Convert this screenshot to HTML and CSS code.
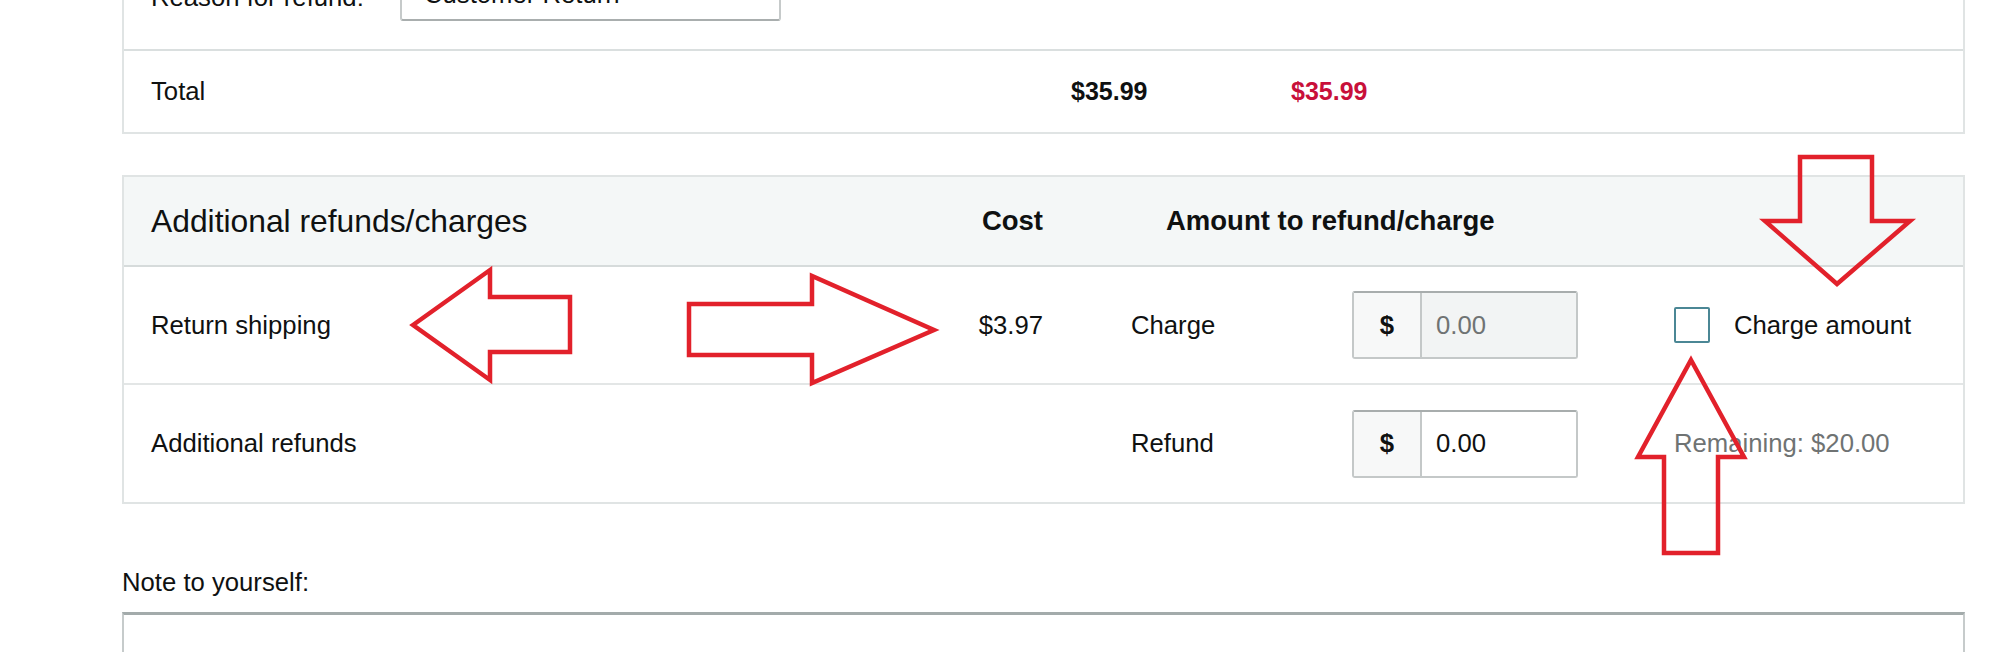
FILE: index.html
```html
<!DOCTYPE html>
<html lang="en">
<head>
<meta charset="utf-8">
<title>Additional refunds/charges</title>
<link rel="stylesheet" href="styles.css">
</head>
<body>
<div class="page">
  <div class="card card-top">
    <div class="reason-row">
      <span class="reason-label">Reason for refund:</span>
      <div class="select"><span>Customer Return</span></div>
    </div>
    <div class="total-row">
      <span>Total</span>
      <span class="amt">$35.99</span>
      <span class="amt red">$35.99</span>
    </div>
  </div>

  <div class="card card-extra">
    <div class="grid-row head">
      <div class="c-label heading">Additional refunds/charges</div>
      <div class="c-cost th">Cost</div>
      <div class="c-amount th">Amount to refund/charge</div>
    </div>
    <div class="grid-row">
      <div class="c-label">Return shipping</div>
      <div class="c-cost">$3.97</div>
      <div class="c-type">Charge</div>
      <div class="c-input">
        <div class="input-group">
          <span class="prefix">$</span>
          <span class="field disabled">0.00</span>
        </div>
      </div>
      <div class="c-extra">
        <span class="checkbox"></span>
        <span>Charge amount</span>
      </div>
    </div>
    <div class="grid-row last">
      <div class="c-label">Additional refunds</div>
      <div class="c-cost"></div>
      <div class="c-type">Refund</div>
      <div class="c-input">
        <div class="input-group">
          <span class="prefix">$</span>
          <span class="field">0.00</span>
        </div>
      </div>
      <div class="c-extra muted">Remaining: $20.00</div>
    </div>
  </div>

  <div class="note-label">Note to yourself:</div>
  <div class="textarea"></div>
</div>

<svg class="annotations" width="2000" height="652" viewBox="0 0 2000 652" aria-hidden="true">
  <polygon points="413,325 490,270 490,297 570,297 570,352 490,352 490,380"/>
  <polygon points="689,304 812,304 812,276 934,330 812,383 812,355 689,355"/>
  <polygon points="1800,157 1872,157 1872,221 1910,221 1837,284 1765,221 1800,221"/>
  <polygon points="1691,360 1744,457 1718,457 1718,553 1664,553 1664,457 1638,457"/>
</svg>
</body>
</html>
```

FILE: styles.css
```css
html, body {
  margin: 0;
  padding: 0;
  background: #ffffff;
}
body {
  width: 2000px;
  height: 652px;
  overflow: hidden;
  position: relative;
  font-family: "Liberation Sans", Arial, sans-serif;
  font-size: 25.7px;
  color: #0f1111;
}
.page {
  margin-left: 122px;
  width: 1843px;
  margin-top: -55px;
}
.card {
  border: 2px solid #e0e4e4;
  box-sizing: border-box;
}
.card-top {
  border-top: none;
}
.reason-row {
  height: 104px;
  display: flex;
  align-items: center;
  padding-left: 27px;
  border-bottom: 2px solid #dadfdf;
}
.reason-label {
  width: 249px;
}
.select {
  width: 381px;
  height: 54px;
  box-sizing: border-box;
  border: 2px solid #c6caca;
  border-bottom-color: #a9aeae;
  border-radius: 3px;
  display: flex;
  align-items: center;
  padding-left: 22px;
  margin-top: -6px;
}
.total-row {
  height: 81px;
  display: grid;
  grid-template-columns: 920px 220px auto;
  align-items: center;
  padding-left: 27px;
}
.amt {
  font-weight: bold;
  font-size: 25px;
}
.red {
  color: #c8103a;
}
.card-extra {
  margin-top: 41px;
}
.grid-row {
  display: grid;
  grid-template-columns: 792px 100px 309px 226px auto;
  align-items: center;
  padding-left: 27px;
  height: 116px;
  border-bottom: 2px solid #e3e6e6;
}
.grid-row.head {
  height: 88px;
  background: #f4f7f7;
  border-bottom: 2px solid #d6dbdb;
}
.grid-row.last {
  border-bottom: none;
  height: 117px;
}
.heading {
  font-size: 31.8px;
}
.th {
  font-weight: bold;
  font-size: 27.5px;
}
.c-cost {
  text-align: right;
}
.c-amount {
  grid-column: 3 / span 3;
  padding-left: 123px;
}
.c-type {
  padding-left: 88px;
}
.input-group {
  display: flex;
  height: 68px;
  width: 226px;
  box-sizing: border-box;
  border: 2px solid #c4c8c8;
  border-top-color: #a8adad;
  border-radius: 3px;
}
.prefix {
  width: 66px;
  flex: none;
  display: flex;
  align-items: center;
  justify-content: center;
  font-weight: bold;
  background: #f7f8f8;
  border-right: 2px solid #c4c8c8;
}
.field {
  flex: 1;
  display: flex;
  align-items: center;
  padding-left: 14px;
}
.field.disabled {
  background: #f2f4f4;
  color: #6f7373;
}
.c-extra {
  padding-left: 96px;
  display: flex;
  align-items: center;
  gap: 24px;
}
.checkbox {
  width: 36px;
  height: 36px;
  box-sizing: border-box;
  border: 2px solid #4b8795;
  border-radius: 2px;
  flex: none;
}
.muted {
  color: #6f7373;
}
.note-label {
  margin-top: 64px;
  height: 30px;
}
.textarea {
  margin-top: 14px;
  height: 80px;
  border: 2px solid #c6cbcb;
  border-top: 3px solid #a3abab;
  box-sizing: border-box;
}
.annotations {
  position: absolute;
  left: 0;
  top: 0;
  pointer-events: none;
}
.annotations polygon {
  fill: none;
  stroke: #e2212b;
  stroke-width: 4.5;
  stroke-linejoin: miter;
}
```
